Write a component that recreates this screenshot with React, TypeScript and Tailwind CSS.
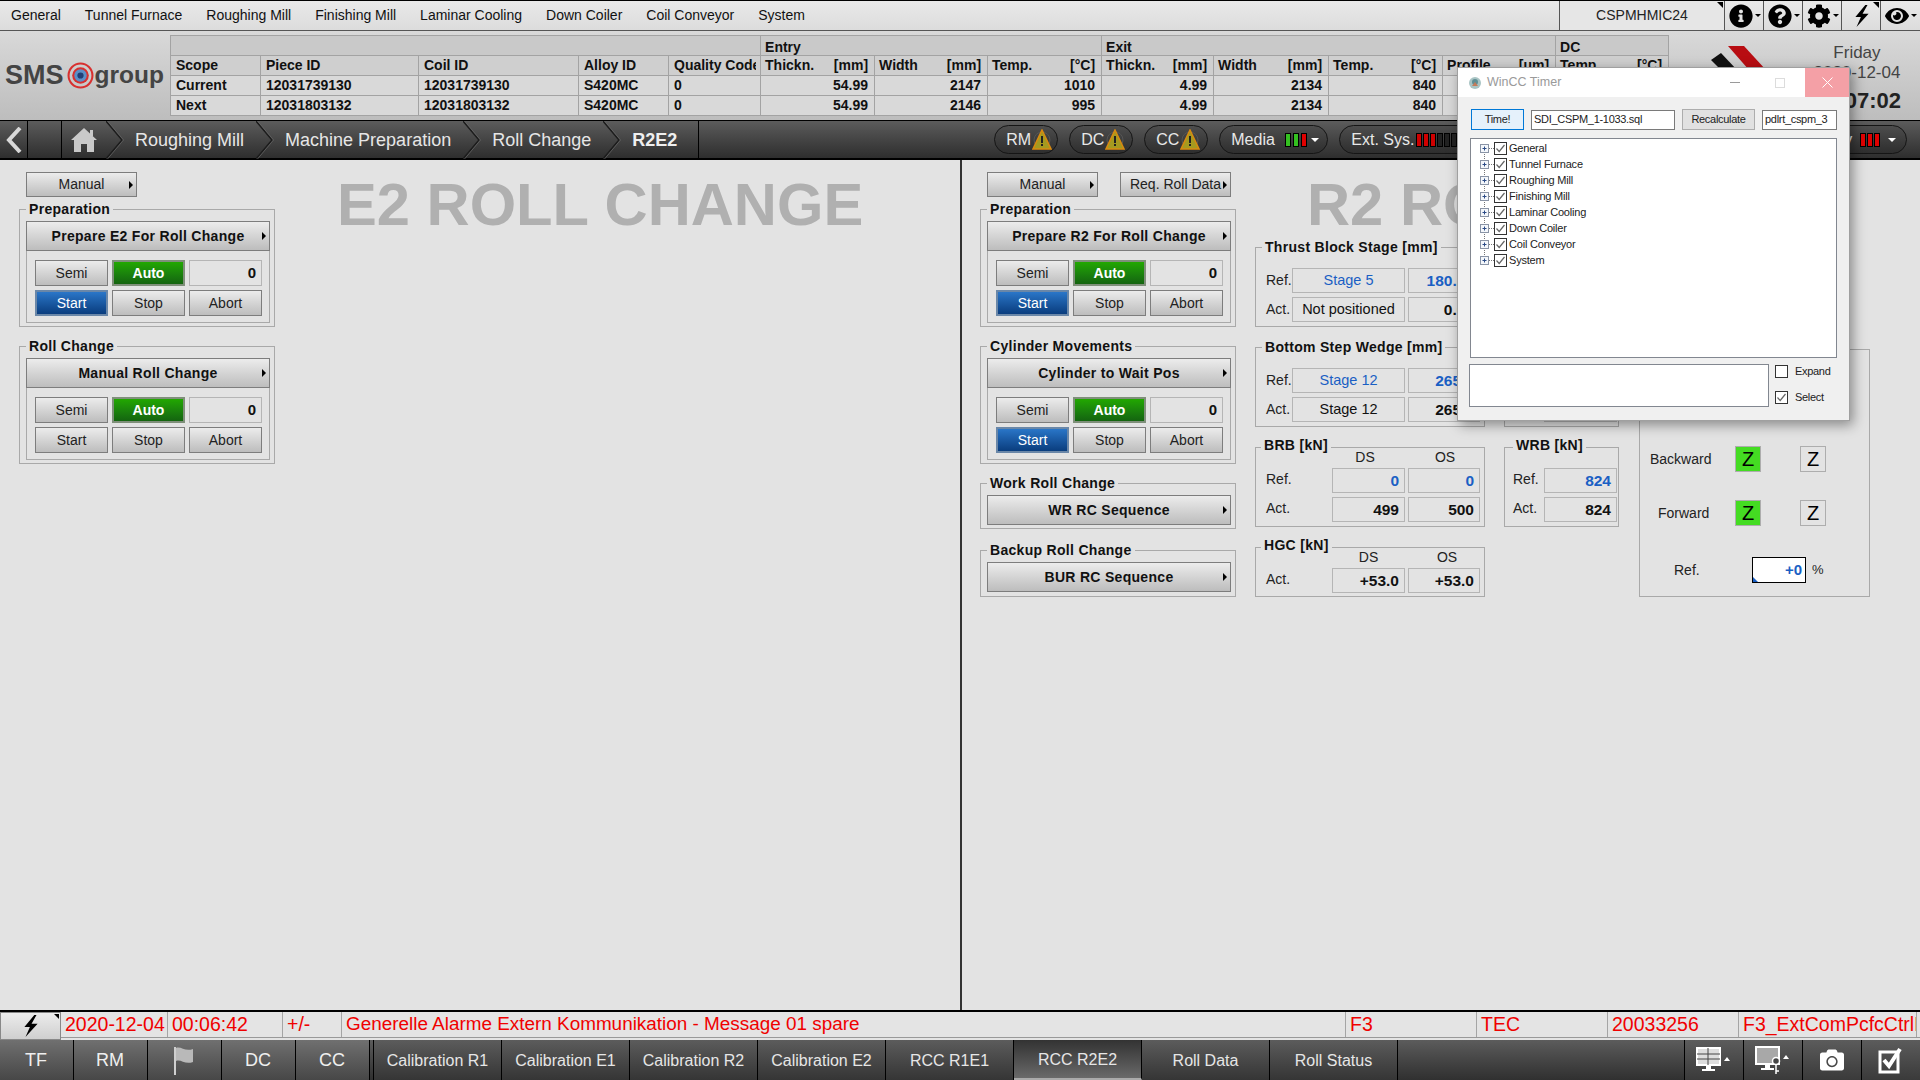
import { ReactNode } from 'react';
import { FaInfoCircle, FaQuestionCircle, FaCog, FaEye, FaCamera } from 'react-icons/fa';

const menuItems = ['General', 'Tunnel Furnace', 'Roughing Mill', 'Finishing Mill', 'Laminar Cooling', 'Down Coiler', 'Coil Conveyor', 'System'];
const treeItems = ['General', 'Tunnel Furnace', 'Roughing Mill', 'Finishing Mill', 'Laminar Cooling', 'Down Coiler', 'Coil Conveyor', 'System'];
const tabs = ['Calibration R1', 'Calibration E1', 'Calibration R2', 'Calibration E2', 'RCC R1E1', 'RCC R2E2', 'Roll Data', 'Roll Status'];

const colWidths = [90, 158, 160, 90, 92, 114, 113, 114, 112, 115, 114, 113, 113];
const unitHeaders = [['Thickn.', '[mm]'], ['Width', '[mm]'], ['Temp.', '[°C]'], ['Thickn.', '[mm]'], ['Width', '[mm]'], ['Temp.', '[°C]'], ['Profile', '[um]'], ['Temp.', '[°C]']];
const rows = [
	['Current', '12031739130', '12031739130', 'S420MC', '0', '54.99', '2147', '1010', '4.99', '2134', '840', '', ''],
	['Next', '12031803132', '12031803132', 'S420MC', '0', '54.99', '2146', '995', '4.99', '2134', '840', '', ''],
];

function Arrow() {
	return <span className="absolute right-[3px] top-1/2 -translate-y-1/2 w-0 h-0 border-y-[4px] border-y-transparent border-l-[4px] border-l-black" />;
}

function MenuButton({ label, wide }: { label: string; wide?: boolean }) {
	if (wide) {
		return (
			<button className="relative block w-[244px] h-[30px] border border-[#7d7d7d] bg-gradient-to-b from-[#ececec] to-[#bdbdbd] text-[14px] font-bold tracking-[0.3px] text-[#111]">
				{label}
				<Arrow />
			</button>
		);
	}
	return (
		<button className="relative block w-[111px] h-[25px] border border-[#7d7d7d] bg-gradient-to-b from-[#ececec] to-[#bdbdbd] text-[14px] text-[#222]">
			{label}
			<Arrow />
		</button>
	);
}

function Group({ title, className, labelClass = 'left-[6px] -top-[10px]', children }: { title?: string; className: string; labelClass?: string; children: ReactNode }) {
	return (
		<div className={`relative border border-[#a9a9a9] ${className}`}>
			{title && (
				<span className={`absolute px-[3px] bg-[#e3e3e3] text-[14px] leading-[18px] font-bold tracking-[0.3px] text-[#111] whitespace-pre ${labelClass}`}>
					{title}
				</span>
			)}
			{children}
		</div>
	);
}

function CtlButton({ label, kind }: { label: string; kind?: 'auto' | 'start' }) {
	if (kind === 'auto') {
		return <button className="w-[73px] h-[26px] border-2 border-[#7f8f7a] bg-gradient-to-b from-[#22a800] to-[#14640f] text-[14px] font-bold text-white">{label}</button>;
	}
	if (kind === 'start') {
		return <button className="w-[73px] h-[26px] border-2 border-[#6a87a8] bg-gradient-to-b from-[#2a76c8] to-[#0a3d7e] text-[14px] text-white">{label}</button>;
	}
	return <button className="w-[73px] h-[26px] border border-[#7d7d7d] bg-gradient-to-b from-[#ececec] to-[#bdbdbd] text-[14px] text-[#222]">{label}</button>;
}

function ControlGroup({ title, button, started, className }: { title: string; button: string; started?: boolean; className: string }) {
	return (
		<Group title={title} className={`w-[256px] h-[118px] pt-[11px] pl-[6px] ${className}`}>
			<div className="w-[244px] h-[102px] border border-[#a9a9a9]">
				<div className="-m-px">
					<MenuButton label={button} wide />
				</div>
				<div className="grid grid-cols-[73px_73px_73px] gap-x-[4px] gap-y-[4px] pl-[8px] pt-[10px]">
					<CtlButton label="Semi" />
					<CtlButton label="Auto" kind="auto" />
					<div className="h-[26px] border border-[#b5b5b5] flex items-center justify-end pr-[5px] text-[15px] font-bold text-[#111]">0</div>
					<CtlButton label="Start" kind={started ? 'start' : undefined} />
					<CtlButton label="Stop" />
					<CtlButton label="Abort" />
				</div>
			</div>
		</Group>
	);
}

function SequenceGroup({ title, button, className }: { title: string; button: string; className: string }) {
	return (
		<Group title={title} className={`w-[256px] pt-[11px] pl-[6px] ${className}`}>
			<MenuButton label={button} wide />
		</Group>
	);
}

function Cell({ value, wide, blue, left }: { value: string; wide?: boolean; blue?: boolean; left?: boolean }) {
	const tone = blue ? 'text-[#1a5fc4]' : 'text-[#111]';
	return (
		<div className={`h-[25px] shrink-0 border border-[#b5b5b5] flex items-center pt-[1px] ${left ? 'w-[113px] justify-center text-[14.5px]' : wide ? 'w-[73px] justify-end pr-[5px] font-bold text-[15.5px]' : 'w-[72px] justify-end pr-[5px] font-bold text-[15.5px]'} ${tone}`}>
			{value}
		</div>
	);
}

function Warning() {
	return (
		<svg width="20" height="22" viewBox="0 0 20 22">
			<circle cx="10" cy="11" r="8" fill="none" stroke="#555" strokeWidth="1" />
			<polygon points="10,1 19,20 1,20" fill="#a59a20" stroke="#d98a10" strokeWidth="1.5" />
			<rect x="9" y="7" width="2" height="7" fill="#222" />
			<rect x="9" y="15" width="2" height="2" fill="#222" />
		</svg>
	);
}

function Bars({ colors, className }: { colors: string[]; className: string }) {
	return (
		<span className={`flex ${className}`}>
			{colors.map((c, i) => (
				<span key={i} className="w-[6px] h-[14px] border border-black" style={{ backgroundColor: c }} />
			))}
		</span>
	);
}

function Pill({ className, children }: { className: string; children: ReactNode }) {
	return (
		<div className={`h-[29px] rounded-[15px] border border-[#151515] bg-gradient-to-b from-[#4d4d4d] to-[#2e2e2e] flex items-center text-[16px] text-[#e8e8e8] ${className}`}>
			{children}
		</div>
	);
}

function Caret({ className }: { className?: string }) {
	return <span className={`w-0 h-0 border-x-[4px] border-x-transparent border-t-[4px] border-t-white ${className ?? ''}`} />;
}

function Chevron() {
	return (
		<svg width="18" height="38" viewBox="0 0 18 38" className="shrink-0">
			<path d="M0 0 L16 19 L0 38" fill="none" stroke="#1c1c1c" strokeWidth="1.5" />
			<path d="M1.5 0 L17.5 19 L1.5 38" fill="none" stroke="#6a6a6a" strokeWidth="0.7" />
		</svg>
	);
}

function Crumb({ label, bold }: { label: string; bold?: boolean }) {
	return (
		<div className="flex items-center h-full">
			<Chevron />
			<span className={`ml-[11px] pr-[12px] pt-[2px] text-[18px] ${bold ? 'font-bold text-[#efefef]' : 'text-[#e6e6e6]'}`}>{label}</span>
		</div>
	);
}

function Bolt({ size }: { size: number }) {
	return (
		<svg width={size} height={size} viewBox="0 0 20 20">
			<polygon points="13,0 4,11 9,11 5,20 16,8 10.5,8 15,0" fill="#000" />
		</svg>
	);
}

function TopIcon({ children, corner }: { children: ReactNode; corner?: boolean }) {
	return (
		<div className="relative w-[39px] h-full border-l border-[#555] flex items-center justify-center gap-[2px] pl-[2px] text-black">
			{children}
			{corner ? (
				<span className="absolute top-[1px] right-[1px] w-0 h-0 border-t-[6px] border-t-black border-l-[6px] border-l-transparent" />
			) : (
				<span className="w-0 h-0 border-x-[3px] border-x-transparent border-t-[3px] border-t-black" />
			)}
		</div>
	);
}

function WinCheck({ checked }: { checked?: boolean }) {
	return (
		<svg width="13" height="13" viewBox="0 0 13 13" className="shrink-0">
			<rect x="0.5" y="0.5" width="12" height="12" fill="#fff" stroke="#333" />
			{checked && <path d="M2.5 6.5 L5.2 9.5 L10.5 3" fill="none" stroke="#666" strokeWidth="1.2" />}
		</svg>
	);
}

function TreeRow({ label, index, last }: { label: string; index: number; last: boolean }) {
	return (
		<div className="flex items-center h-[16px]">
			<svg width="14" height="16" viewBox="0 0 14 16" className="shrink-0">
				<path d={`M4.5 ${index === 0 ? 8 : 0} V${last ? 8 : 16} M9 8.5 H14`} stroke="#777" strokeDasharray="1 1" fill="none" />
				<rect x="0.5" y="4.5" width="8" height="8" fill="#f4f7fb" stroke="#8a94a6" />
				<path d="M2.5 8.5 H6.5 M4.5 6.5 V10.5" stroke="#2b4a86" />
			</svg>
			<WinCheck checked />
			<span className="ml-[2px] text-[11px] tracking-[-0.2px] text-[#222]">{label}</span>
		</div>
	);
}

function WinccTimer() {
	return (
		<div className="absolute left-[1457px] top-[67px] w-[393px] h-[354px] bg-[#f0f0f0] border border-[#a0a0a0] shadow-[3px_4px_12px_rgba(0,0,0,0.4)]">
			<div className="h-[29px] bg-white flex items-center">
				<svg width="14" height="14" viewBox="0 0 14 14" className="ml-[10px]">
					<circle cx="7" cy="7" r="6" fill="#a9c4c4" />
					<circle cx="7" cy="6" r="3" fill="#5f8f95" />
					<path d="M4 10 L10 10 L7 6 Z" fill="#c47b5a" />
				</svg>
				<span className="ml-[5px] w-[72px] whitespace-nowrap text-[12.5px] text-[#9a9a9a]">WinCC Timer</span>
				<span className="ml-[171px] w-[10px] h-[1px] bg-[#9a9a9a]" />
				<span className="ml-[35px] w-[10px] h-[10px] border border-[#dcdcdc]" />
				<div className="ml-[20px] w-[44px] h-[29px] bg-[#f4a0a6] flex items-center justify-center">
					<svg width="11" height="11" viewBox="0 0 11 11">
						<path d="M0.5 0.5 L10.5 10.5 M10.5 0.5 L0.5 10.5" stroke="#fff" />
					</svg>
				</div>
			</div>
			<div className="pt-[12px] pl-[12px] text-[11px] tracking-[-0.3px] text-[#222]">
				<div className="flex items-center gap-[7px] pl-[1px]">
					<button className="w-[53px] h-[21px] bg-[#e5f1fb] border border-[#0078d7]">Time!</button>
					<div className="w-[144px] h-[20px] bg-white border border-[#7a7a7a] flex items-center pl-[2px]">SDI_CSPM_1-1033.sql</div>
					<button className="w-[73px] h-[21px] bg-[#e1e1e1] border border-[#adadad]">Recalculate</button>
					<div className="w-[75px] h-[20px] bg-white border border-[#7a7a7a] flex items-center pl-[2px]">pdlrt_cspm_3</div>
				</div>
				<div className="mt-[8px] w-[367px] h-[220px] bg-white border border-[#828790] pl-[9px] pt-[1px]">
					{treeItems.map((t, i) => (
						<TreeRow key={t} label={t} index={i} last={i === treeItems.length - 1} />
					))}
				</div>
				<div className="mt-[6px] -ml-[1px] flex">
					<div className="w-[300px] h-[43px] bg-white border border-[#828790]" />
					<div className="ml-[6px] flex flex-col gap-[13px] pt-[1px]">
						<div className="flex items-center gap-[7px] h-[13px]"><WinCheck /><span>Expand</span></div>
						<div className="flex items-center gap-[7px] h-[13px]"><WinCheck checked /><span>Select</span></div>
					</div>
				</div>
			</div>
		</div>
	);
}

function TopBar() {
	return (
		<div className="h-[31px] shrink-0 flex border-y border-t-black border-b-[#555] bg-gradient-to-b from-[#e9e9e9] to-[#dcdcdc]">
			<div className="flex items-center gap-[24px] pl-[11px] text-[14px] text-[#111] w-[1559px]">
				{menuItems.map(m => <span key={m}>{m}</span>)}
			</div>
			<div className="relative w-[165px] h-full border-l border-[#555] flex items-center justify-center text-[14px] text-[#222] bg-[#e6e6e6]">
				CSPMHMIC24
				<span className="absolute top-[1px] right-[1px] w-0 h-0 border-t-[6px] border-t-black border-l-[6px] border-l-transparent" />
			</div>
			<TopIcon><FaInfoCircle size={24} /></TopIcon>
			<TopIcon><FaQuestionCircle size={24} /></TopIcon>
			<TopIcon><FaCog size={24} /></TopIcon>
			<TopIcon corner><Bolt size={22} /></TopIcon>
			<TopIcon><FaEye size={24} /></TopIcon>
		</div>
	);
}

function UnitHeader({ name, unit }: { name: string; unit: string }) {
	return (
		<td className="border border-[#a3a3a3] pl-[4px] pr-[6px] pb-[2px]">
			<div className="flex justify-between">
				<span>{name}</span>
				<span>{unit}</span>
			</div>
		</td>
	);
}

function Header() {
	return (
		<div className="h-[89px] shrink-0 flex bg-gradient-to-b from-[#d9d9d9] to-[#bdbdbd]">
			<div className="w-[170px] shrink-0 flex items-center pl-[5px] font-bold text-[#444]">
				<span className="text-[27px]">SMS</span>
				<svg width="27" height="27" viewBox="0 0 26 26" className="ml-[3px] mr-[1px] shrink-0">
					<circle cx="13" cy="13" r="11.5" fill="none" stroke="#d8302f" strokeWidth="2" />
					<circle cx="13" cy="13" r="8" fill="#d8302f" />
					<circle cx="13" cy="13" r="6" fill="#5b8fc7" />
					<circle cx="13" cy="13" r="3" fill="#1f3f77" />
				</svg>
				<span className="text-[24.5px]">group</span>
			</div>
			<div className="pt-[4px] shrink-0">
				<table className="table-fixed border-collapse w-[1498px] text-[14px] font-bold leading-[16px] text-[#111]">
					<colgroup>
						{colWidths.map((w, i) => <col key={i} style={{ width: w }} />)}
					</colgroup>
					<tbody>
						<tr className="h-[20px] bg-[#c9c9c9]">
							<td colSpan={5} className="border border-[#a3a3a3]" />
							<td colSpan={3} className="border border-[#a3a3a3] px-[4px] pt-[2px]">Entry</td>
							<td colSpan={4} className="border border-[#a3a3a3] px-[4px] pt-[2px]">Exit</td>
							<td className="border border-[#a3a3a3] px-[4px] pt-[2px]">DC</td>
						</tr>
						<tr className="h-[20px] bg-[#cfcfcf]">
							<td className="border border-[#a3a3a3] px-[5px] pb-[2px]">Scope</td>
							<td className="border border-[#a3a3a3] px-[5px] pb-[2px]">Piece ID</td>
							<td className="border border-[#a3a3a3] px-[5px] pb-[2px]">Coil ID</td>
							<td className="border border-[#a3a3a3] px-[5px] pb-[2px]">Alloy ID</td>
							<td className="border border-[#a3a3a3] pl-[5px] pb-[2px]">
								<div className="w-[82px] overflow-hidden whitespace-nowrap">Quality Code</div>
							</td>
							{unitHeaders.map((u, i) => <UnitHeader key={i} name={u[0]} unit={u[1]} />)}
						</tr>
						{rows.map(r => (
							<tr key={r[0]} className="h-[20px] bg-[#d9d9d9]">
								{r.map((c, i) => (
									<td key={i} className={`border border-[#a3a3a3] pl-[5px] pr-[6px] pb-[2px] ${i > 4 ? 'text-right' : ''}`}>{c}</td>
								))}
							</tr>
						))}
					</tbody>
				</table>
			</div>
			<div className="relative flex-1 flex justify-end pr-[19px] overflow-hidden">
				<svg width="60" height="26" viewBox="0 0 60 26" className="absolute left-[42px] top-[14px]">
					<polygon points="17,1 33,1 55,25 38,25" fill="#b80d12" />
					<polygon points="0,15 10,8 26,25 10,25" fill="#111" />
				</svg>
				<div className="flex flex-col items-center text-[#444] pt-[12px] text-[17px] leading-[20px]">
					<span>Friday</span>
					<span>2020-12-04</span>
					<span className="mt-[8px] text-[22px] font-bold text-[#222]">00:07:02</span>
				</div>
			</div>
		</div>
	);
}

function NavBar() {
	return (
		<div className="h-[40px] shrink-0 flex items-center border-y border-black border-b-2 bg-gradient-to-b from-[#5c5c5c] to-[#2e2e2e]">
			<div className="w-[28px] h-full border-r border-black flex items-center justify-center">
				<svg width="18" height="26" viewBox="0 0 18 26">
					<path d="M15 1 L4 13 L15 25" fill="none" stroke="#d8d8d8" strokeWidth="4" />
				</svg>
			</div>
			<div className="w-[34px] h-full border-r border-black" />
			<div className="w-[44px] h-full flex items-center pl-[9px]">
				<svg width="26" height="26" viewBox="0 0 26 26">
					<path d="M13 1 L26 13 L23 13 L23 25 L16 25 L16 17 L10 17 L10 25 L3 25 L3 13 L0 13 Z" fill="#c9c9c9" />
					<rect x="19" y="3" width="3" height="6" fill="#c9c9c9" />
				</svg>
			</div>
			<Crumb label="Roughing Mill" />
			<Crumb label="Machine Preparation" />
			<Crumb label="Roll Change" />
			<Crumb label="R2E2" bold />
			<div className="ml-[9px] h-full border-l border-black" />
			<div className="ml-[295px] flex items-center gap-[11px]">
				<Pill className="w-[64px] pl-[11px] gap-[1px]">RM<Warning /></Pill>
				<Pill className="w-[64px] pl-[11px] gap-[1px]">DC<Warning /></Pill>
				<Pill className="w-[64px] pl-[11px] gap-[1px]">CC<Warning /></Pill>
				<Pill className="w-[109px] pl-[11px] gap-[10px]">
					Media
					<Bars colors={['#34c020', '#34c020', '#e00000']} className="gap-[2px]" />
					<Caret className="-ml-[6px]" />
				</Pill>
				<Pill className="w-[139px] pl-[11px] gap-[2px]">
					Ext. Sys.
					<Bars colors={['#d00000', '#d00000', '#d00000', '#222', '#222', '#222']} className="gap-[1px]" />
				</Pill>
				<Pill className="w-[418px] justify-end pr-[10px] gap-[8px]">
					Safety
					<Bars colors={['#e00000', '#e00000', '#e00000']} className="gap-[1px]" />
					<Caret />
				</Pill>
			</div>
		</div>
	);
}

function LeftPanel() {
	return (
		<div className="w-[960px] shrink-0 flex pl-[19px] pt-[12px] overflow-hidden">
			<div className="w-[256px] shrink-0">
				<div className="pl-[7px] mb-[12px]"><MenuButton label="Manual" /></div>
				<ControlGroup title="Preparation" button="Prepare E2 For Roll Change" started className="" />
				<ControlGroup title="Roll Change" button="Manual Roll Change" className="mt-[19px]" />
			</div>
			<div className="ml-[62px] pt-[1px] text-[59.7px] leading-[64px] font-bold text-[#b0b0b0] whitespace-nowrap">E2 ROLL CHANGE</div>
		</div>
	);
}

function RightPanel() {
	return (
		<div className="flex-1 flex pl-[18px] border-l-2 border-[#333] overflow-hidden">
			<div className="w-[256px] shrink-0 pt-[12px]">
				<div className="flex pl-[7px] gap-[22px] mb-[12px]">
					<MenuButton label="Manual" />
					<MenuButton label="Req. Roll Data" />
				</div>
				<ControlGroup title="Preparation" button="Prepare R2 For Roll Change" started className="" />
				<ControlGroup title="Cylinder Movements" button="Cylinder to Wait Pos" started className="mt-[19px]" />
				<SequenceGroup title="Work Roll Change" button="WR RC Sequence" className="h-[46px] mt-[19px]" />
				<SequenceGroup title="Backup Roll Change" button="BUR RC Sequence" className="h-[47px] mt-[21px]" />
			</div>
			<div className="flex-1 ml-[19px]">
				<div className="h-[87px] pl-[52px] pt-[13px] text-[59.7px] leading-[64px] font-bold text-[#b0b0b0] whitespace-nowrap">R2 ROLL CHANGE</div>
				<div className="flex">
					<div className="w-[230px] shrink-0 flex flex-col gap-[20px]">
						<StageGroup title="Thrust Block Stage [mm]" ref1="Stage 5" ref2="180.00" act1="Not positioned" act2="0.00" />
						<StageGroup title="Bottom Step Wedge [mm]" ref1="Stage 12" ref2="265.0" act1="Stage 12" act2="265.0" />
						<Group title="BRB [kN]" labelClass="left-[5px] -top-[12px]" className="h-[80px] pl-[10px]">
							<div className="flex h-[20px] text-[14px] leading-[18px] text-[#222]">
								<span className="w-[66px]" />
								<span className="w-[73px] text-center pr-[7px]">DS</span>
								<span className="w-[75px] text-center pl-[5px]">OS</span>
							</div>
							<ForceRow label="Ref." ds="0" os="0" blue />
							<div className="h-[4px]" />
							<ForceRow label="Act." ds="499" os="500" />
						</Group>
						<Group title="HGC [kN]" labelClass="left-[5px] -top-[12px]" className="h-[50px] pl-[10px]">
							<div className="flex h-[20px] text-[14px] leading-[18px] text-[#222]">
								<span className="w-[66px]" />
								<span className="w-[73px] text-center">DS</span>
								<span className="w-[75px] text-center pl-[9px]">OS</span>
							</div>
							<ForceRow label="Act." ds="+53.0" os="+53.0" />
						</Group>
					</div>
					<div className="ml-[19px] w-[115px] shrink-0 pt-[100px] flex flex-col gap-[20px]">
						<Group className="h-[80px] pl-[8px] pt-[20px]">
							<WrbRow label="Ref." value="0" blue />
							<div className="h-[4px]" />
							<WrbRow label="Act." value="0" />
						</Group>
						<Group title="WRB [kN]" labelClass="left-[8px] -top-[12px]" className="h-[80px] pl-[8px] pt-[20px]">
							<WrbRow label="Ref." value="824" blue />
							<div className="h-[4px]" />
							<WrbRow label="Act." value="824" />
						</Group>
					</div>
					<Group className="ml-[20px] mt-[102px] w-[231px] h-[248px] pt-[96px] text-[14px] text-[#222]">
						<div className="flex items-center h-[26px]">
							<span className="w-[95px] pl-[10px]">Backward</span>
							<ZButton active />
							<span className="w-[39px]" />
							<ZButton />
						</div>
						<div className="flex items-center h-[26px] mt-[28px]">
							<span className="w-[95px] pl-[18px]">Forward</span>
							<ZButton active />
							<span className="w-[39px]" />
							<ZButton />
						</div>
						<div className="flex items-center h-[26px] mt-[31px]">
							<span className="w-[112px] pl-[34px]">Ref.</span>
							<div className="relative w-[54px] h-[26px] bg-white border border-black flex items-center justify-end pr-[3px] text-[15px] font-bold text-[#1a5fc4]">
								+0
								<span className="absolute left-0 bottom-0 w-0 h-0 border-b-[5px] border-b-[#1a5fc4] border-r-[5px] border-r-transparent" />
							</div>
							<span className="ml-[6px] text-[13px]">%</span>
						</div>
					</Group>
				</div>
			</div>
		</div>
	);
}

function StageGroup({ title, ref1, ref2, act1, act2 }: { title: string; ref1: string; ref2: string; act1: string; act2: string }) {
	return (
		<Group title={title} className="h-[80px] pl-[10px] pt-[20px]">
			<div className="flex items-center gap-[3px]">
				<span className="w-[23px] whitespace-nowrap text-[14px] text-[#222]">Ref.</span>
				<Cell value={ref1} left blue />
				<Cell value={ref2} blue />
			</div>
			<div className="mt-[4px] flex items-center gap-[3px]">
				<span className="w-[23px] whitespace-nowrap text-[14px] text-[#222]">Act.</span>
				<Cell value={act1} left />
				<Cell value={act2} />
			</div>
		</Group>
	);
}

function ForceRow({ label, ds, os, blue }: { label: string; ds: string; os: string; blue?: boolean }) {
	return (
		<div className="flex items-center">
			<span className="w-[66px] text-[14px] text-[#222] -mt-[2px]">{label}</span>
			<Cell value={ds} wide blue={blue} />
			<span className="w-[3px]" />
			<Cell value={os} blue={blue} />
		</div>
	);
}

function WrbRow({ label, value, blue }: { label: string; value: string; blue?: boolean }) {
	return (
		<div className="flex items-center">
			<span className="w-[31px] text-[14px] text-[#222] -mt-[2px]">{label}</span>
			<Cell value={value} wide blue={blue} />
		</div>
	);
}

function ZButton({ active }: { active?: boolean }) {
	return (
		<div className={`w-[26px] h-[26px] border border-[#adadad] flex items-center justify-center text-[20px] text-black ${active ? 'bg-[#44dc22]' : ''}`}>Z</div>
	);
}

function AlarmCell({ className, children }: { className: string; children: string }) {
	return <div className={`h-full border-r border-[#a5a5a5] pl-[4px] flex items-center overflow-hidden whitespace-nowrap ${className}`}>{children}</div>;
}

function AlarmBar() {
	return (
		<div className="h-[30px] shrink-0 flex border-t-2 border-black bg-[#e4e4e4]">
			<div className="relative w-[61px] h-full border border-[#888] bg-gradient-to-b from-[#ececec] to-[#cfcfcf] flex items-center justify-center">
				<Bolt size={22} />
				<span className="absolute top-[1px] right-[1px] w-0 h-0 border-t-[5px] border-t-black border-l-[5px] border-l-transparent" />
			</div>
			<div className="flex-1 h-[26px] flex text-[19.5px] text-[#f00000] border-b border-[#999]">
				<AlarmCell className="w-[107px]">2020-12-04</AlarmCell>
				<AlarmCell className="w-[115px]">00:06:42</AlarmCell>
				<AlarmCell className="w-[59px]">+/-</AlarmCell>
				<AlarmCell className="w-[1004px] text-[18.9px]">Generelle Alarme Extern Kommunikation - Message 01 spare</AlarmCell>
				<AlarmCell className="w-[131px]">F3</AlarmCell>
				<AlarmCell className="w-[131px]">TEC</AlarmCell>
				<AlarmCell className="w-[131px]">20033256</AlarmCell>
				<AlarmCell className="w-[178px]">F3_ExtComPcfcCtrlHmi</AlarmCell>
			</div>
		</div>
	);
}

function BottomBar() {
	const square = 'w-[74px] h-full pt-[1px] pr-[1px] border-r border-black bg-gradient-to-b from-[#707070] to-[#474747] flex items-center justify-center text-[18px] text-[#efefef]';
	const icon = 'w-[59px] h-full border-l border-black bg-gradient-to-b from-[#5c5c5c] to-[#3a3a3a] flex items-center justify-center text-white';
	return (
		<div className="h-[40px] shrink-0 flex bg-gradient-to-b from-[#5c5c5c] to-[#303030]">
			<div className={square}>TF</div>
			<div className={square}>RM</div>
			<div className={square}>
				<svg width="22" height="28" viewBox="0 0 22 28">
					<rect x="1" y="0" width="2" height="28" fill="#cfcfcf" />
					<path d="M3 1 C8 -1 12 5 20 2 L20 15 C12 18 8 12 3 14 Z" fill="#b9b9b9" />
				</svg>
			</div>
			<div className={square}>DC</div>
			<div className={square}>CC</div>
			<div className="w-[4px] border-r border-black" />
			{tabs.map(t => (
				<div
					key={t}
					className={`w-[128px] h-full pt-[1px] border-r border-black flex items-center justify-center text-[16px] text-[#e6e6e6] ${t === 'RCC R2E2' ? 'bg-gradient-to-b from-[#333] to-[#6a6a6a] border-b-2 border-b-[#aaa]' : 'bg-gradient-to-b from-[#5c5c5c] to-[#353535]'}`}
				>
					{t}
				</div>
			))}
			<div className="flex-1" />
			<div className={icon}>
				<svg width="36" height="26" viewBox="0 0 36 26">
					<rect x="1" y="1" width="23" height="17" fill="#ddd" stroke="#fff" strokeWidth="2" />
					<path d="M1 7 H24 M1 12 H24 M12 1 V18" stroke="#444" strokeWidth="1" />
					<rect x="10" y="19" width="5" height="3" fill="#fff" />
					<rect x="6" y="22" width="13" height="2" fill="#fff" />
					<path d="M28 14 L31 10 L34 14 Z" fill="#fff" />
				</svg>
			</div>
			<div className={icon}>
				<svg width="36" height="30" viewBox="0 0 36 30">
					<rect x="1" y="2" width="23" height="17" fill="#a8a8a8" stroke="#fff" strokeWidth="2" />
					<rect x="10" y="20" width="5" height="3" fill="#fff" />
					<rect x="6" y="23" width="13" height="2" fill="#fff" />
					<circle cx="21" cy="16" r="3.5" fill="#444" stroke="#fff" strokeWidth="1.5" />
					<path d="M21 19 V29 M21 26 H24" stroke="#fff" strokeWidth="1.5" />
					<path d="M28 14 L31 10 L34 14 Z" fill="#fff" />
				</svg>
			</div>
			<div className={icon}><FaCamera size={24} /></div>
			<div className={icon}>
				<svg width="26" height="28" viewBox="0 0 26 28">
					<rect x="2" y="6" width="18" height="20" fill="none" stroke="#fff" strokeWidth="3" />
					<path d="M6 14 L11 20 L22 3" fill="none" stroke="#fff" strokeWidth="4" />
				</svg>
			</div>
		</div>
	);
}

export default function App() {
	return (
		<div className="relative w-[1920px] h-[1080px] overflow-hidden flex flex-col bg-[#e3e3e3] font-['Liberation_Sans',Arial,sans-serif]">
			<TopBar />
			<Header />
			<NavBar />
			<div className="flex-1 flex min-h-0">
				<LeftPanel />
				<RightPanel />
			</div>
			<AlarmBar />
			<BottomBar />
			<WinccTimer />
		</div>
	);
}
